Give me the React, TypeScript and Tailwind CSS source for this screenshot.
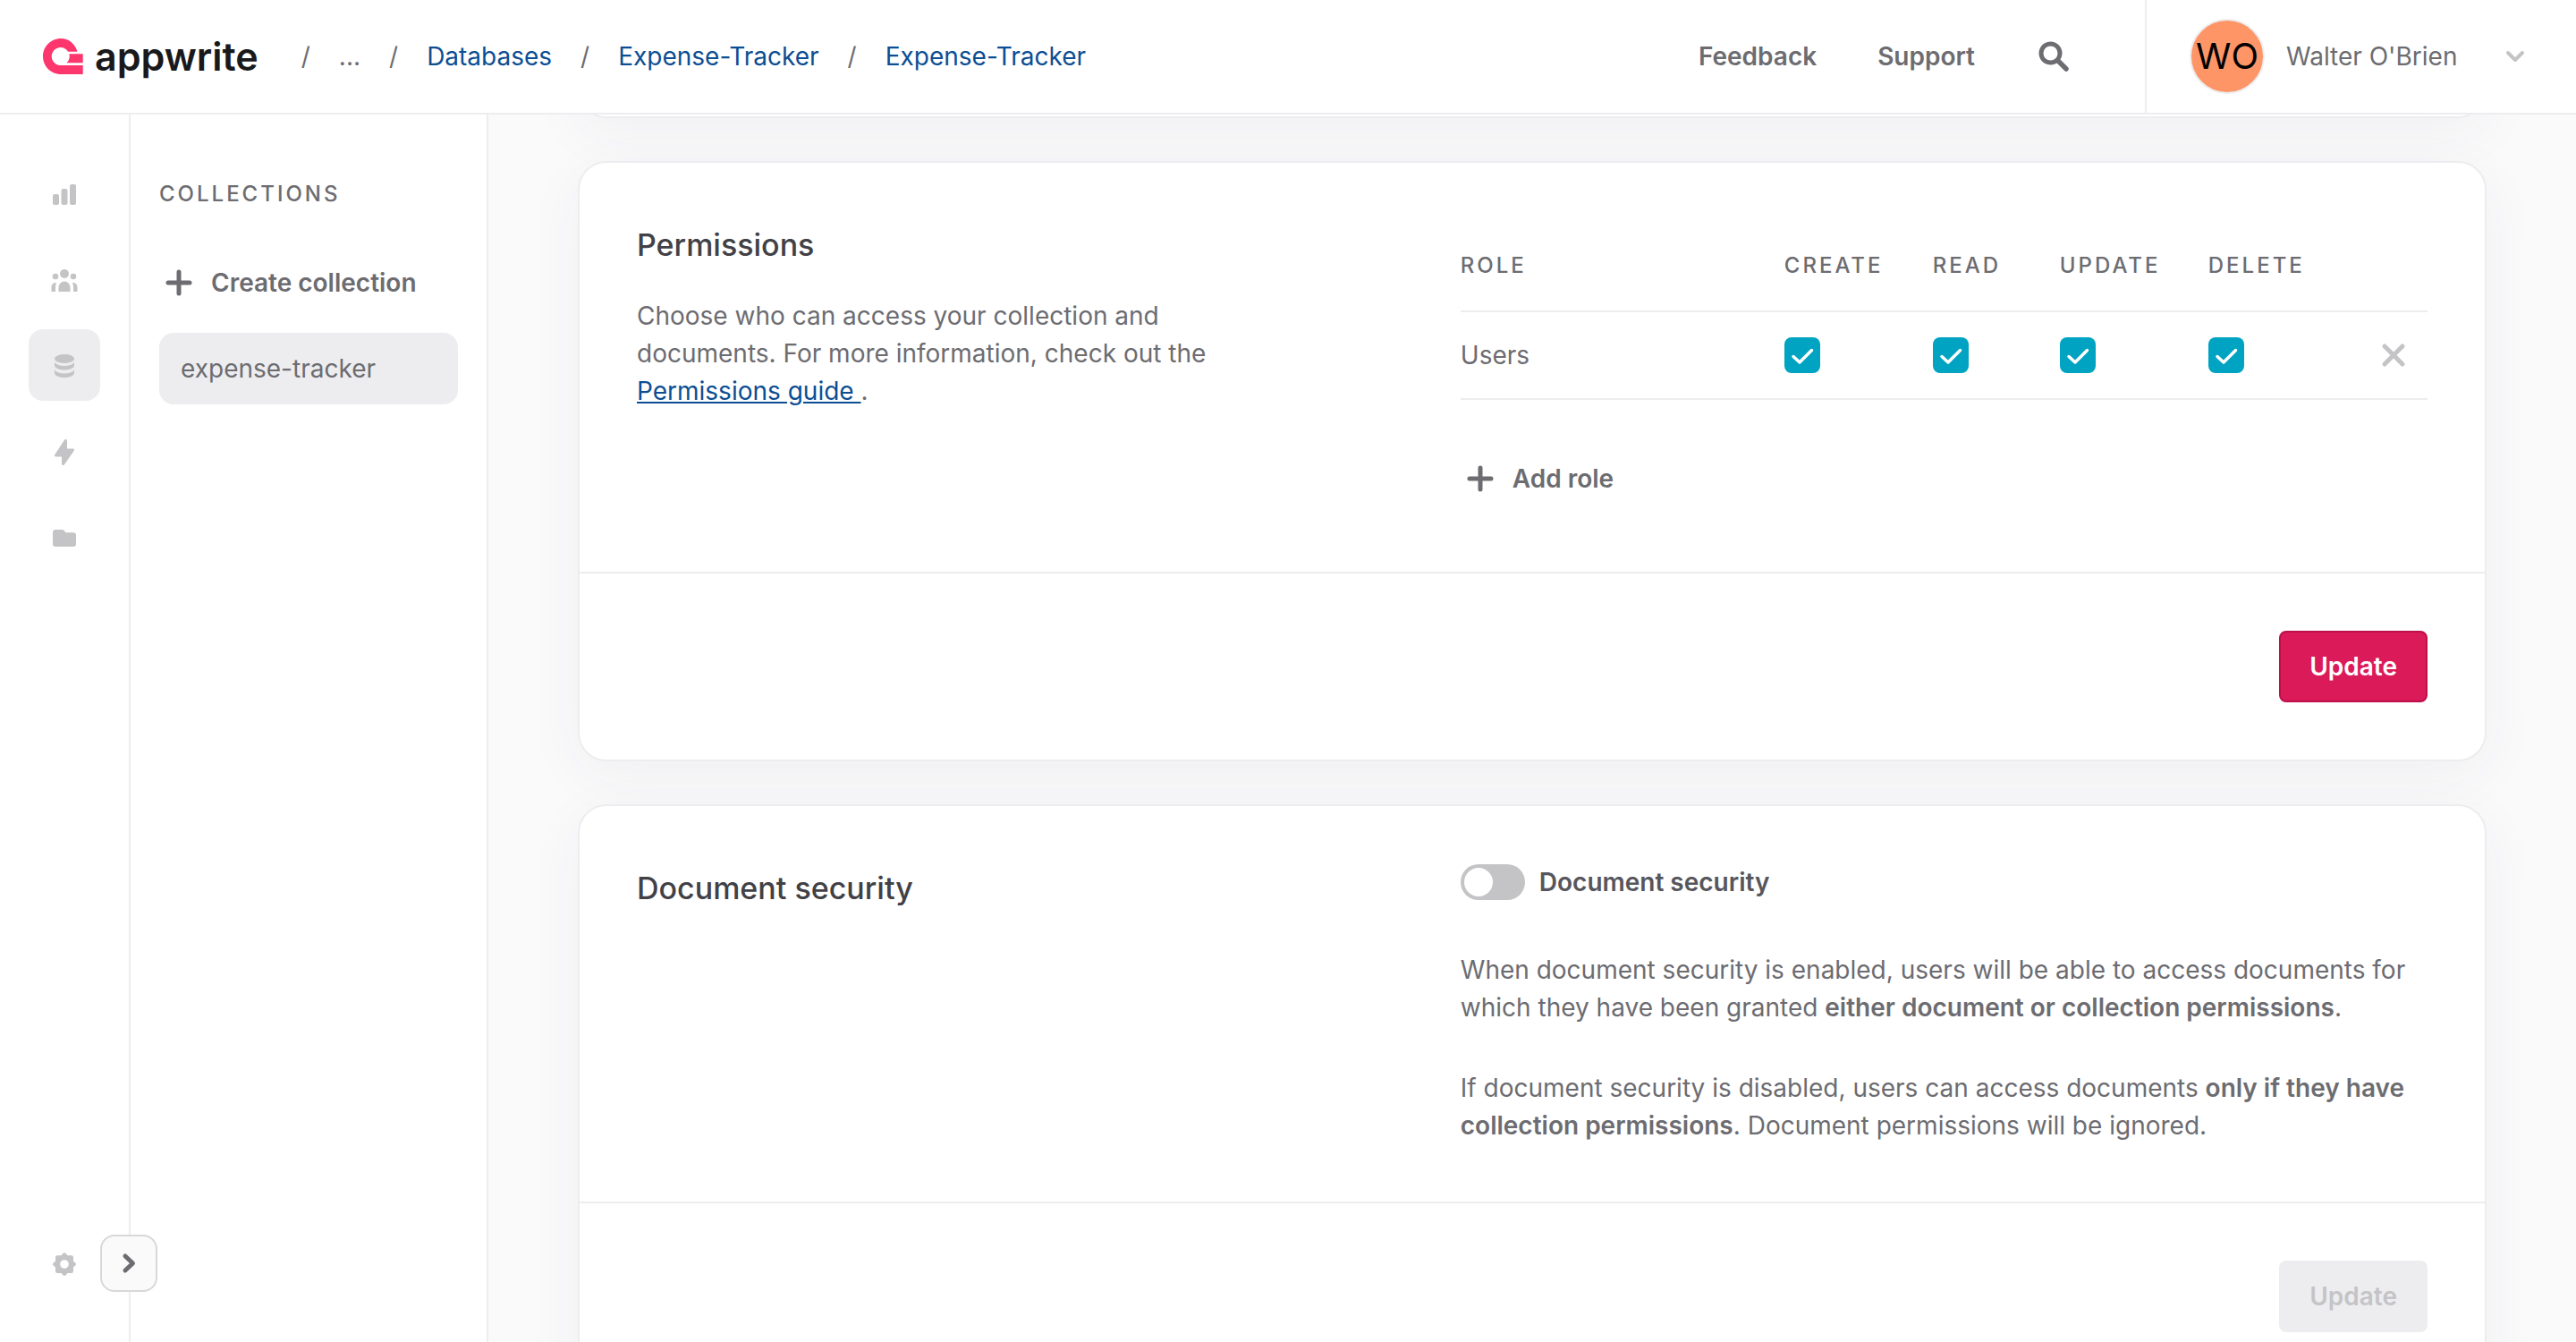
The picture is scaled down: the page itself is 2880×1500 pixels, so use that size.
import React from "react";

function Logo() {
  return (
    <a href="#" aria-label="appwrite" className="flex items-center gap-3 text-[#19191c]">
      <svg width="46" height="42" viewBox="0 -1 46 42" aria-hidden="true">
        <path fill="#fd366e" d="M44.700 30V40H20C9 40 0 31 0 20S9 0 20 0c8.700 0 16 6 18.500 14.700H28.200A10 10 0 1 0 19.700 30Z" />
        <path fill="#fd366e" d="M29.400 17.300h15.300v10H26.500c2.600-2.600 4-6 2.900-10Z" />
      </svg>
      <span className="text-[43px] leading-[48px] font-semibold">appwrite</span>
    </a>
  );
}

function Plus() {
  return (
    <svg width="40" height="40" viewBox="0 0 40 40" aria-hidden="true">
      <path d="M20 8v24M8 20h24" stroke="currentColor" strokeWidth="5" strokeLinecap="round" />
    </svg>
  );
}

const navIcons: { label: string; active?: boolean; art: React.ReactNode }[] = [
  {
    label: "Overview",
    art: (
      <>
        <rect x="7" y="19" width="7" height="12" rx="2" />
        <rect x="16.500" y="13" width="7" height="18" rx="2" />
        <rect x="26" y="8" width="7" height="23" rx="2" />
      </>
    ),
  },
  {
    label: "Auth",
    art: (
      <>
        <circle cx="20" cy="12" r="5" />
        <circle cx="10" cy="15" r="3.300" />
        <circle cx="30" cy="15" r="3.300" />
        <path d="M13.500 32v-4.500a6.500 7 0 0 1 13 0V32ZM5.500 32v-4.500c0-4 2-5.500 5.500-5.500-.7 1.500-1 3.500-1 5.500V32ZM34.500 32v-4.500c0-4-2-5.500-5.500-5.500.7 1.500 1 3.500 1 5.500V32Z" />
      </>
    ),
  },
  {
    label: "Databases",
    active: true,
    art: (
      <>
        <ellipse cx="20" cy="11" rx="11" ry="5" />
        <path d="M9 15c2 2.700 6 4 11 4s9-1.300 11-4v3.500c0 2.800-5 5-11 5s-11-2.200-11-5Z" />
        <path d="M9 23.500c2 2.700 6 4 11 4s9-1.300 11-4V27c0 2.800-5 5-11 5s-11-2.200-11-5Z" />
      </>
    ),
  },
  {
    label: "Functions",
    art: <path d="M23 6.500V15.500h6.500c1.400 0 2 1.200 1.300 2.300L20 33.200c-.9 1.400-3 .9-3-.8V24.500h-6.500c-1.300 0-2-1.200-1.300-2.300L20 5.700c.9-1.400 3-.9 3 .8Z" />,
  },
  {
    label: "Storage",
    art: <path d="M7 13a3 3 0 0 1 3-3h7.500a3 3 0 0 1 2.400 1.200L21.500 13.200H30a3 3 0 0 1 3 3V26a3 3 0 0 1-3 3H10a3 3 0 0 1-3-3Z" />,
  },
];

function Rail() {
  return (
    <nav aria-label="Project" className="relative flex w-[146px] shrink-0 flex-col items-center justify-between border-r-2 border-[#ededf0] bg-white pt-12 pb-12">
      <ul className="flex flex-col gap-4">
        {navIcons.map((n) => (
          <li key={n.label}>
            <a
              href="#"
              aria-label={n.label}
              className={`flex size-20 items-center justify-center rounded-2xl ${n.active ? "bg-[#ededf0]" : ""}`}
            >
              <svg width="40" height="40" viewBox="0 -2 40 40" className="fill-[#c4c4c6]" aria-hidden="true">
                {n.art}
              </svg>
            </a>
          </li>
        ))}
      </ul>
      <a href="#" aria-label="Settings" className="flex size-20 items-center justify-center">
        <svg width="40" height="40" viewBox="0 -1 40 40" className="fill-[#c4c4c6]" aria-hidden="true">
          <path
            fillRule="evenodd"
            d="M18.200 8.300q1.800-2 3.600 0l1.700 2h4.500q2 0 2 2v4.500l2 1.400q2 1.800 0 3.600l-2 1.700V28q0 2-2 2h-4.500l-1.700 2q-1.800 2-3.600 0l-1.700-2H12q-2 0-2-2v-4.500l-2-1.700q-2-1.800 0-3.600l2-1.400V12.300q0-2 2-2h4.500ZM20 15.200a4.800 4.800 0 1 0 0 9.600 4.800 4.800 0 0 0 0-9.600Z"
          />
        </svg>
      </a>
      <button
        type="button"
        aria-label="Expand navigation"
        className="absolute right-[-32px] bottom-[56px] flex size-16 items-center justify-center rounded-2xl border-2 border-[#d8d8db] bg-[#fafafb] text-[#6c6c71]"
      >
        <svg width="24" height="24" viewBox="0 0 24 24" fill="none" aria-hidden="true">
          <path d="m8 4 8.500 8L8 20" stroke="currentColor" strokeWidth="5" strokeLinecap="round" strokeLinejoin="round" />
        </svg>
      </button>
    </nav>
  );
}

function Card({ title, intro, children, action }: { title: string; intro?: React.ReactNode; children: React.ReactNode; action: React.ReactNode }) {
  return (
    <section className="rounded-[32px] border-2 border-[#ededf0] bg-white shadow-[0_16px_64px_rgba(55,59,77,0.05)]">
      <div className="grid grid-cols-[4fr_6fr] gap-[200px] p-16">
        <div>
          <h2 className="mt-1 text-[34px] leading-[48px] font-medium text-[#414146]">{title}</h2>
          {intro}
        </div>
        <div className="min-w-0">{children}</div>
      </div>
      <div className="flex justify-end border-t-2 border-[#ededf0] p-16">{action}</div>
    </section>
  );
}

const perms = ["Create", "Read", "Update", "Delete"];

function Check({ label }: { label: string }) {
  return (
    <label className="relative block size-10">
      <input
        type="checkbox"
        aria-label={label}
        defaultChecked
        className="peer block size-10 appearance-none rounded-lg bg-[#c4c4c6] checked:bg-[#00a3c1]"
      />
      <svg viewBox="0 0 40 40" fill="none" className="pointer-events-none absolute inset-0 hidden peer-checked:block" aria-hidden="true">
        <path d="m10 21.500 7 6.500L30.500 14.500" stroke="#fff" strokeWidth="3.500" strokeLinecap="round" strokeLinejoin="round" />
      </svg>
    </label>
  );
}

export default function App() {
  return (
    <div className="flex h-screen flex-col overflow-hidden bg-[#fafafb] font-['Inter',sans-serif] text-[28px] leading-[42px] text-[#6c6c71]">
      <header className="relative z-10 flex h-32 shrink-0 items-center border-b-2 border-[#ededf0] bg-white pl-12">
        <Logo />
        <nav aria-label="Breadcrumb" className="ml-12 flex gap-8">
          <span>/</span>
          <button type="button">...</button>
          <span>/</span>
          <a href="#" className="text-[#0c4e93]">Databases</a>
          <span>/</span>
          <a href="#" className="text-[#0c4e93]">Expense-Tracker</a>
          <span>/</span>
          <a href="#" className="text-[#0c4e93]">Expense-Tracker</a>
        </nav>
        <div className="ml-auto flex h-full items-center">
          <div className="flex items-center gap-[68px] pr-[82px] font-semibold">
            <button type="button">Feedback</button>
            <button type="button">Support</button>
            <button type="button" aria-label="Search">
              <svg width="40" height="40" viewBox="0 0 40 40" fill="none" aria-hidden="true">
                <circle cx="16.500" cy="16.500" r="10.500" stroke="currentColor" strokeWidth="5" />
                <path d="m25 25 9 9" stroke="currentColor" strokeWidth="5.500" strokeLinecap="round" />
              </svg>
            </button>
          </div>
          <button type="button" className="flex h-full w-[482px] items-center border-l-2 border-[#ededf0] pr-14 pl-12">
            <span className="flex size-[84px] items-center justify-center rounded-full border-2 border-[#ededf0] bg-[#fe9567] text-[40px] leading-none text-black">WO</span>
            <span className="ml-6">Walter O'Brien</span>
            <svg width="24" height="24" viewBox="0 0 24 24" fill="none" className="ml-auto text-[#c4c4c6]" aria-hidden="true">
              <path d="m4 8 8 8 8-8" stroke="currentColor" strokeWidth="4" strokeLinecap="round" strokeLinejoin="round" />
            </svg>
          </button>
        </div>
      </header>
      <div className="flex min-h-0 flex-1">
        <Rail />
        <aside className="w-[400px] shrink-0 border-r-2 border-[#ededf0] bg-white px-8 pt-[68px]">
          <h2 className="text-[24px] leading-[42px] font-medium tracking-[3px] uppercase">Collections</h2>
          <button type="button" className="mt-[38px] flex h-20 items-center gap-4 pl-0.5 font-semibold">
            <Plus />
            Create collection
          </button>
          <a href="#" className="mt-4 flex h-20 items-center rounded-2xl bg-[#ededf0] px-6">expense-tracker</a>
        </aside>
        <main className="flex min-w-0 flex-1 flex-col gap-12 overflow-hidden px-[100px]">
          <div className="-mt-20 h-[84px] shrink-0 rounded-[32px] border-2 border-[#ededf0] bg-white shadow-[0_16px_64px_rgba(55,59,77,0.05)]" />
          <Card
            title="Permissions"
            intro={
              <p className="mt-[34px]">
                Choose who can access your collection and documents. For more information, check out the{" "}
                <a href="#" className="text-[#0c4e93] underline">Permissions guide </a>.
              </p>
            }
            action={
              <button type="button" className="h-20 rounded-lg border-2 border-[#bd0f4a] bg-[#db1a5a] px-8 font-semibold text-white">Update</button>
            }
          >
            <table className="w-full table-fixed text-left">
              <colgroup>
                <col className="w-[362px]" />
                <col className="w-[166px]" />
                <col className="w-[142px]" />
                <col className="w-[166px]" />
                <col className="w-[166px]" />
                <col />
              </colgroup>
              <thead>
                <tr className="h-[102px] border-b-2 border-[#ededf0] text-[24px] tracking-[3px] uppercase">
                  <th className="font-medium">Role</th>
                  {perms.map((p) => (
                    <th key={p} className="font-medium">{p}</th>
                  ))}
                  <td />
                </tr>
              </thead>
              <tbody>
                <tr className="h-[98px] border-b-2 border-[#ededf0]">
                  <td>Users</td>
                  {perms.map((p) => (
                    <td key={p}><Check label={p} /></td>
                  ))}
                  <td>
                    <button type="button" aria-label="Remove role" className="ml-auto block pr-[18px] text-[#c4c4c6]">
                      <svg width="40" height="40" viewBox="0 0 40 40" fill="none" aria-hidden="true">
                        <path d="m10 10 20 20m0-20L10 30" stroke="currentColor" strokeWidth="5" strokeLinecap="round" />
                      </svg>
                    </button>
                  </td>
                </tr>
              </tbody>
            </table>
            <button type="button" className="mt-12 flex h-20 items-center gap-4 pl-0.5 font-semibold">
              <Plus />
              Add role
            </button>
          </Card>
          <Card
            title="Document security"
            action={
              <button type="button" disabled className="h-20 rounded-lg bg-[#ededf0] px-[34px] font-semibold text-[#c4c4c6]">Update</button>
            }
          >
            <label className="flex items-center gap-4 font-semibold text-[#56565c]">
              <input
                type="checkbox"
                role="switch"
                className="h-10 w-[72px] appearance-none rounded-full bg-[#c4c4c6] p-1 before:block before:size-8 before:rounded-full before:bg-white checked:bg-[#00a3c1] checked:before:ml-auto"
              />
              Document security
            </label>
            <p className="mt-14">
              When document security is enabled, users will be able to access documents for which they have been granted{" "}
              <b className="font-semibold">either document or collection permissions</b>.
            </p>
            <p className="mt-12">
              If document security is disabled, users can access documents{" "}
              <b className="font-semibold">only if they have collection permissions</b>. Document permissions will be ignored.
            </p>
          </Card>
        </main>
      </div>
    </div>
  );
}
